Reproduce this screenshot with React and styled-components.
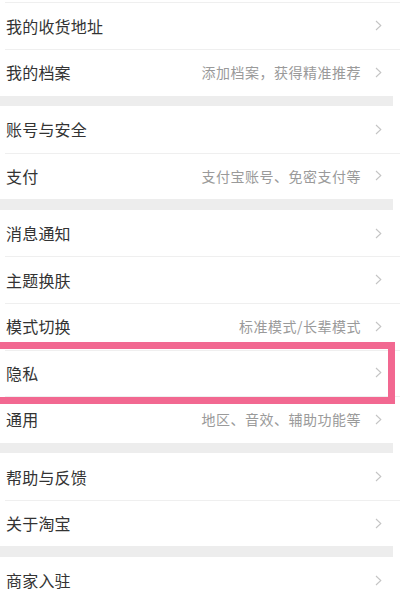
import React from "react";
import styled, { createGlobalStyle } from "styled-components";

const Global = createGlobalStyle`
  html, body { margin: 0; padding: 0; background: #ffffff; }
  body {
    font-family: "Noto Sans CJK SC", "Noto Sans", sans-serif;
    -webkit-font-smoothing: antialiased;
  }
`;

const Page = styled.div`
  position: relative;
  width: 400px;
  height: 594px;
  overflow: hidden;
  background: #ffffff;
`;

const TopEdge = styled.div`
  height: 2.4px;
  background: #ffffff;
`;

const Section = styled.div`
  display: flex;
  flex-direction: column;
  background: #ffffff;
`;

const Gap = styled.div`
  height: 10.5px;
  background: #ededed;
  margin-right: 7px;
`;

const Row = styled.div`
  box-sizing: border-box;
  height: 46.6px;
  display: flex;
  align-items: center;
  padding: 0 18px 0 6px;
  background-image: ${(p) =>
    p.$divided ? "linear-gradient(#efefef, #efefef)" : "none"};
  background-size: calc(100% - 5px) 1px;
  background-position: right top;
  background-repeat: no-repeat;
`;

const Label = styled.span`
  flex: 1;
  font-size: 16px;
  color: #333333;
  letter-spacing: 0.2px;
  line-height: 1;
`;

const Hint = styled.span`
  font-size: 14px;
  color: #9a9a9a;
  letter-spacing: 0.5px;
  margin-right: 14px;
  line-height: 1;
`;

const Chevron = styled.svg`
  width: 7px;
  height: 11px;
  flex: none;
`;

const Highlight = styled.div`
  position: absolute;
  left: -12px;
  top: 342px;
  width: 407px;
  height: 62px;
  box-sizing: border-box;
  border: 7.5px solid #f26891;
  pointer-events: none;
`;

const Arrow = () => (
  <Chevron viewBox="0 0 7 11">
    <path d="M1 1 L5.8 5.5 L1 10" fill="none" stroke="#c4c4c4" strokeWidth="1.1" />
  </Chevron>
);

const sections = [
  [
    { label: "我的收货地址" },
    { label: "我的档案", hint: "添加档案，获得精准推荐" },
  ],
  [
    { label: "账号与安全" },
    { label: "支付", hint: "支付宝账号、免密支付等" },
  ],
  [
    { label: "消息通知" },
    { label: "主题换肤" },
    { label: "模式切换", hint: "标准模式/长辈模式" },
    { label: "隐私" },
    { label: "通用", hint: "地区、音效、辅助功能等" },
  ],
  [{ label: "帮助与反馈" }, { label: "关于淘宝" }],
  [{ label: "商家入驻" }],
];

export default function App() {
  return (
    <Page>
      <Global />
      <TopEdge />
      {sections.map((items, si) => (
        <React.Fragment key={si}>
          {si > 0 && <Gap />}
          <Section>
            {items.map((it, i) => (
              <Row key={it.label} $divided={si === 0 || i > 0}>
                <Label>{it.label}</Label>
                {it.hint && <Hint>{it.hint}</Hint>}
                <Arrow />
              </Row>
            ))}
          </Section>
        </React.Fragment>
      ))}
      <Highlight />
    </Page>
  );
}
